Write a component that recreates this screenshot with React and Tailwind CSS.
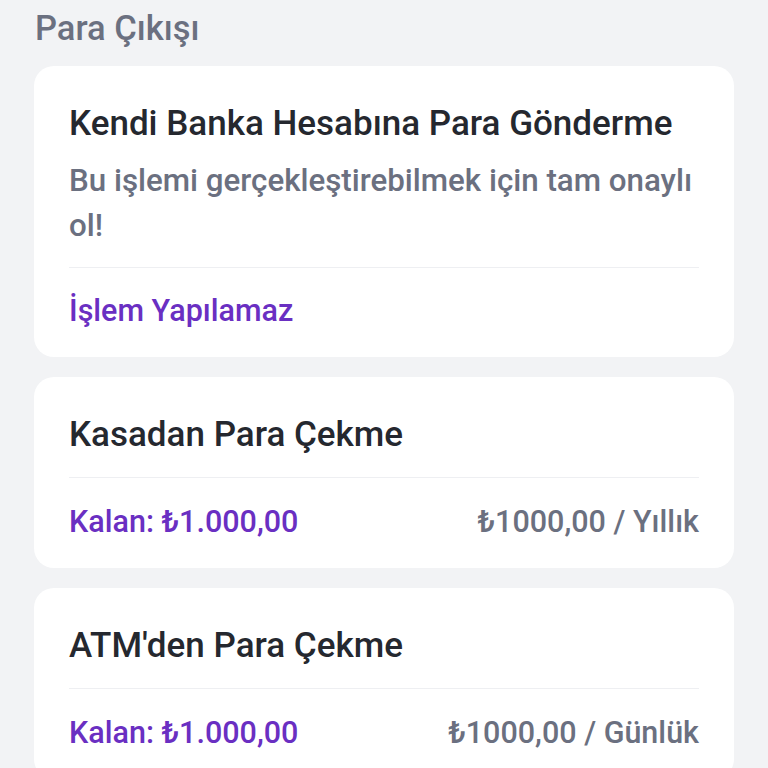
export default function App() {
  const limits = [
    { title: 'Kasadan Para Çekme', left: 'Kalan: ₺1.000,00', right: '₺1000,00 / Yıllık' },
    { title: "ATM'den Para Çekme", left: 'Kalan: ₺1.000,00', right: '₺1000,00 / Günlük' },
  ]

  return (
    <div
      className="min-h-screen w-[768px] h-[768px] overflow-hidden bg-[#f2f3f5] px-[34px] pt-[8px]"
      style={{ fontFamily: 'Roboto, "Noto Sans", sans-serif' }}
    >
      <h1 className="pl-[1px] text-[34.5px] leading-[40px] font-medium text-[#6b7080]">Para Çıkışı</h1>

      <div className="mt-[18px] flex flex-col gap-[20px]">
        <div className="rounded-[20px] bg-white px-[35px] pt-[40px] pb-[28px]">
          <h2 className="text-[35px] leading-[36px] font-medium text-[#25282f]">Kendi Banka Hesabına Para Gönderme</h2>
          <p className="mt-[16px] text-[31.3px] leading-[45px] font-medium text-[#6b7080]">
            Bu işlemi gerçekleştirebilmek için tam onaylı ol!
          </p>
          <div className="mt-[19px] h-px bg-[#eeeff2]"></div>
          <p className="mt-[25px] text-[30.5px] leading-[36px] font-medium text-[#6a2fc2]">İşlem Yapılamaz</p>
        </div>

        {limits.map((item) => (
          <div key={item.title} className="rounded-[20px] bg-white px-[35px] pt-[40px] pb-[28px]">
            <h2 className="text-[35px] leading-[36px] font-medium text-[#25282f]">{item.title}</h2>
            <div className="mt-[24px] h-px bg-[#eeeff2]"></div>
            <div className="mt-[26px] flex items-center justify-between text-[30.5px] leading-[36px] font-medium">
              <span className="text-[#6a2fc2]">{item.left}</span>
              <span className="text-[#6b7080]">{item.right}</span>
            </div>
          </div>
        ))}
      </div>
    </div>
  )
}
